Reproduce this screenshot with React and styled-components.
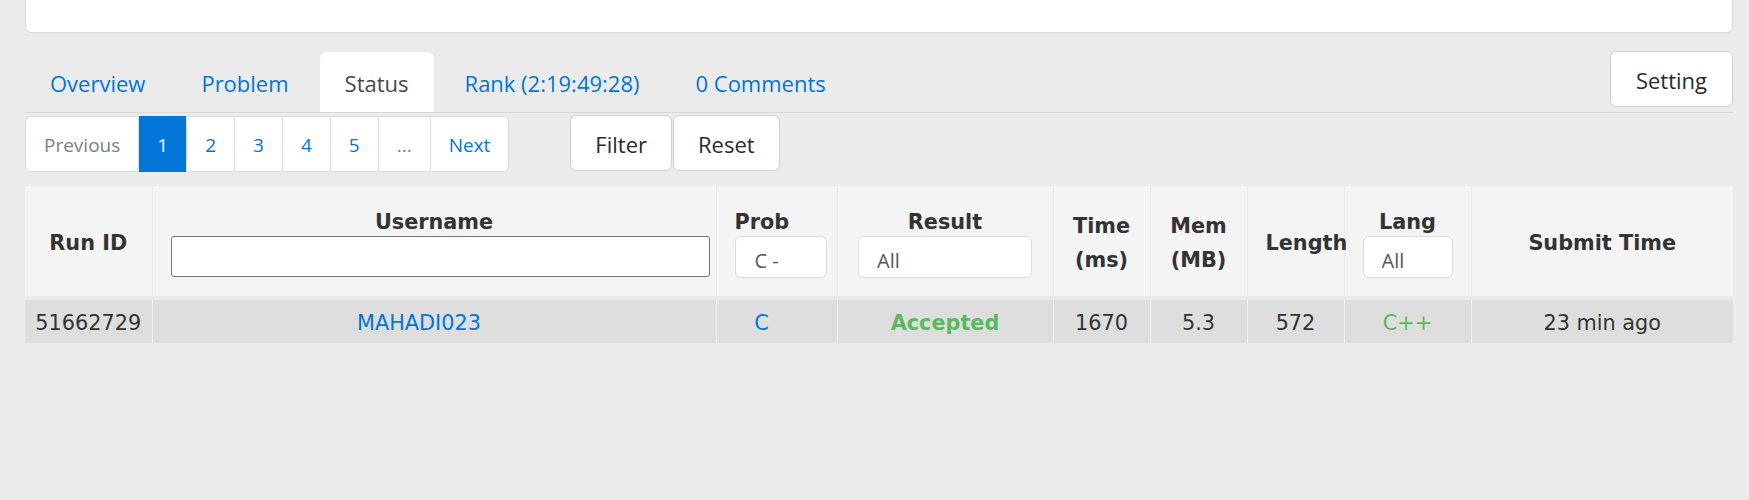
import React from "react";
import styled, { createGlobalStyle } from "styled-components";

const GlobalStyle = createGlobalStyle`
  html, body {
    margin: 0;
    padding: 0;
    background: #ebebeb;
  }
  body {
    font-family: "Open Sans", "Liberation Sans", sans-serif;
    color: #292b2c;
  }
`;

const Page = styled.div`
  padding: 0 16px 0 25px;
`;

const TopCard = styled.div`
  height: 32px;
  background: #fff;
  border: 1px solid #dadada;
  border-top: none;
  border-radius: 0 0 6px 6px;
`;

const NavBar = styled.div`
  display: flex;
  align-items: flex-end;
  margin-top: 19px;
  border-bottom: 1px solid #d8d8d8;
`;

const Tab = styled.a`
  display: block;
  height: 57px;
  line-height: 57px;
  padding: 3px 25px 0;
  margin-right: 6px;
  font-size: 22px;
  text-decoration: none;
  cursor: pointer;
  border-radius: 7px 7px 0 0;
  color: ${(p) => (p.$active ? "#464a4c" : "#0275d8")};
  background: ${(p) => (p.$active ? "#fff" : "transparent")};
`;

const Button = styled.button`
  height: 56px;
  padding: 2px 24px 0;
  background: #fff;
  border: 1px solid #cfcfcf;
  border-radius: 6px;
  font-family: "Open Sans", "Liberation Sans", sans-serif;
  font-size: 22px;
  color: #292b2c;
  cursor: pointer;
`;

const SettingButton = styled(Button)`
  align-self: flex-start;
  margin: -1px 0 5px auto;
  padding: 2px 25px 0;
`;

const Toolbar = styled.div`
  display: flex;
  align-items: flex-start;
  margin-top: 2px;
`;

const Pager = styled.div`
  display: flex;
  margin-top: 1px;
  background: #fff;
  border: 1px solid #dcdcdc;
  border-radius: 6px;
`;

const PageItem = styled.a`
  display: block;
  padding: 2px 18px 0;
  font-size: 19px;
  text-decoration: none;
  cursor: pointer;
  border-left: ${(p) => (p.$first ? "none" : "1px solid #dcdcdc")};
  color: ${(p) => (p.$active ? "#fff" : p.$disabled ? "#7a8187" : "#0275d8")};
  background: ${(p) => (p.$active ? "#0275d8" : "transparent")};
  margin: ${(p) => (p.$active ? "-1px 0" : "0")};
  height: ${(p) => (p.$active ? "54px" : "52px")};
  line-height: ${(p) => (p.$active ? "54px" : "52px")};
`;

const FilterGroup = styled.div`
  display: flex;
  gap: 1px;
  margin-left: 61px;
`;

const Table = styled.table`
  width: 100%;
  margin-top: 14px;
  border-collapse: collapse;
  table-layout: fixed;
  font-family: "DejaVu Sans", Verdana, sans-serif;
  font-size: 20.8px;
  line-height: 1.5;
  color: #333;
`;

const HeadRow = styled.tr`
  background: #f4f4f4;
  border-bottom: 4px solid #e9e9e9;
`;

const Th = styled.th`
  height: 106px;
  padding: 4px 18px 0;
  vertical-align: middle;
  font-weight: bold;
  line-height: 34px;
  text-align: ${(p) => p.$align || "center"};
  border-left: 1px solid #ebebeb;
  white-space: normal;
  &:first-child {
    border-left: none;
  }
`;

const HeadLabel = styled.div`
  display: block;
  line-height: 27px;
`;

const NameInput = styled.input`
  display: block;
  box-sizing: border-box;
  width: 539px;
  height: 41px;
  margin: 0;
  border: 1px solid #767676;
  border-radius: 3px;
  background: #fff;
  font-size: 18px;
`;

const FilterSelect = styled.select`
  appearance: none;
  -webkit-appearance: none;
  box-sizing: border-box;
  width: ${(p) => p.$width}px;
  height: 42px;
  padding: 7px 0 0 ${(p) => p.$pad || 18}px;
  border: 1px solid #dcdcdc;
  border-radius: 6px;
  background: #fff;
  font-family: "Open Sans", "Liberation Sans", sans-serif;
  font-size: 20px;
  color: #55595c;
  outline: none;
`;

const BodyRow = styled.tr`
  background: #dedede;
`;

const Td = styled.td`
  height: 39px;
  padding: 4px ${(p) => (p.$shift ? 8 + p.$shift * 2 : 8)}px 0 8px;
  text-align: center;
  vertical-align: middle;
  white-space: nowrap;
  border-left: 1px solid #f0f0f0;
  font-weight: ${(p) => (p.$bold ? "bold" : "normal")};
  color: ${(p) => p.$color || "#333"};
  &:first-child {
    border-left: none;
  }
`;

const CellLink = styled.a`
  color: #0275d8;
  text-decoration: none;
`;

const tabs = [
  { label: "Overview" },
  { label: "Problem" },
  { label: "Status", active: true },
  { label: "Rank (2:19:49:28)" },
  { label: "0 Comments" },
];

const pages = ["1", "2", "3", "4", "5", "..."];

const columns = [127, 564, 121, 216, 97, 97, 97, 127, 262];

const App = () => {
  return (
    <Page>
      <GlobalStyle />
      <TopCard />
      <NavBar>
        {tabs.map((t) => (
          <Tab key={t.label} $active={t.active}>
            {t.label}
          </Tab>
        ))}
        <SettingButton>Setting</SettingButton>
      </NavBar>

      <Toolbar>
        <Pager>
          <PageItem $first $disabled>Previous</PageItem>
          {pages.map((p, i) => (
            <PageItem key={p} $active={i === 0} $disabled={p === "..."}>
              {p}
            </PageItem>
          ))}
          <PageItem>Next</PageItem>
        </Pager>
        <FilterGroup>
          <Button>Filter</Button>
          <Button>Reset</Button>
        </FilterGroup>
      </Toolbar>

      <Table>
        <colgroup>
          {columns.map((w, i) => (
            <col key={i} style={{ width: w }} />
          ))}
        </colgroup>
        <thead>
          <HeadRow>
            <Th>Run ID</Th>
            <Th>
              <HeadLabel>Username</HeadLabel>
              <NameInput type="text" />
            </Th>
            <Th $align="left">
              <HeadLabel>Prob</HeadLabel>
              <FilterSelect $width={92} $pad={19} defaultValue="C">
                <option value="C">C -</option>
              </FilterSelect>
            </Th>
            <Th>
              <HeadLabel>Result</HeadLabel>
              <FilterSelect $width={174} defaultValue="all">
                <option value="all">All</option>
              </FilterSelect>
            </Th>
            <Th>Time (ms)</Th>
            <Th>Mem (MB)</Th>
            <Th>Length</Th>
            <Th>
              <HeadLabel>Lang</HeadLabel>
              <FilterSelect $width={90} defaultValue="all">
                <option value="all">All</option>
              </FilterSelect>
            </Th>
            <Th>Submit Time</Th>
          </HeadRow>
        </thead>
        <tbody>
          <BodyRow>
            <Td>51662729</Td>
            <Td $shift={15}>
              <CellLink>MAHADI023</CellLink>
            </Td>
            <Td $shift={15}>
              <CellLink>C</CellLink>
            </Td>
            <Td $bold $color="#5cb85c">Accepted</Td>
            <Td>1670</Td>
            <Td>5.3</Td>
            <Td>572</Td>
            <Td $color="#5cb85c">C++</Td>
            <Td>23 min ago</Td>
          </BodyRow>
        </tbody>
      </Table>
    </Page>
  );
};

export default App;
